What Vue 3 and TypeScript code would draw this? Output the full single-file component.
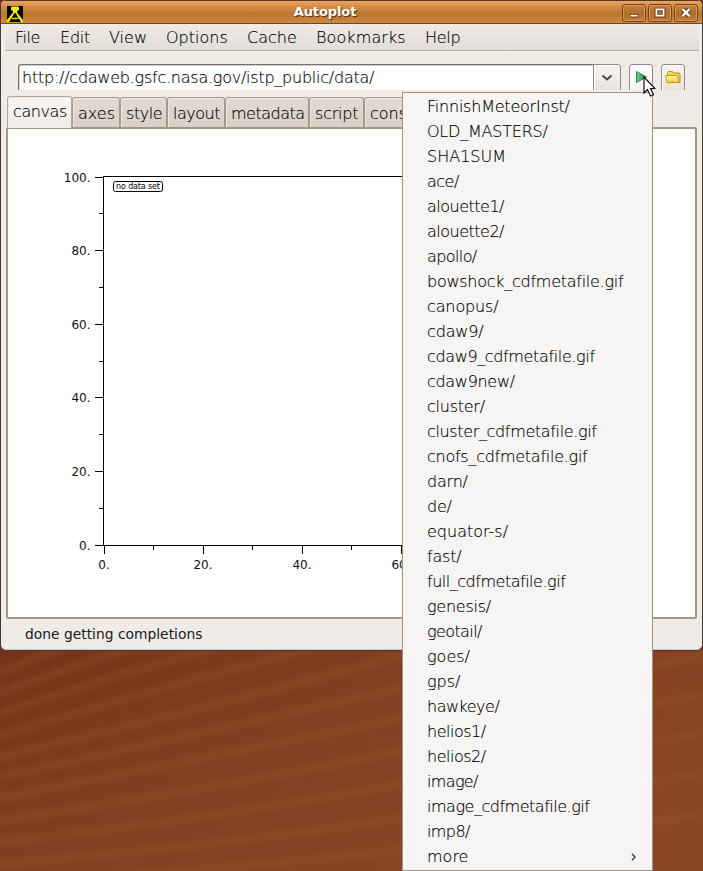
<script setup lang="ts">
interface Caption { label: string; width: number; spacing: number }
const menus: Caption[] = [
  { label: 'File', width: 45, spacing: -0.5 },
  { label: 'Edit', width: 49, spacing: -0.2 },
  { label: 'View', width: 57, spacing: 0 },
  { label: 'Options', width: 81, spacing: 0 },
  { label: 'Cache', width: 69, spacing: 0 },
  { label: 'Bookmarks', width: 109, spacing: 0.1 },
  { label: 'Help', width: 50, spacing: -0.3 },
]
const tabs: Caption[] = [
  { label: 'axes', width: 48, spacing: 0 },
  { label: 'style', width: 47, spacing: -0.45 },
  { label: 'layout', width: 58, spacing: -0.5 },
  { label: 'metadata', width: 84, spacing: -0.5 },
  { label: 'script', width: 55, spacing: -0.2 },
  { label: 'console', width: 72, spacing: 0 },
]
const completions: [string, number][] = [
  ['FinnishMeteorInst/', -0.22], ['OLD_MASTERS/', -0.22], ['SHA1SUM', 0], ['ace/', -0.5],
  ['alouette1/', -0.5], ['alouette2/', -0.5], ['apollo/', -0.6], ['bowshock_cdfmetafile.gif', -0.26],
  ['canopus/', -0.12], ['cdaw9/', -0.15], ['cdaw9_cdfmetafile.gif', -0.36], ['cdaw9new/', -0.3],
  ['cluster/', -0.25], ['cluster_cdfmetafile.gif', -0.35], ['cnofs_cdfmetafile.gif', -0.26],
  ['darn/', -0.2], ['de/', -0.2], ['equator-s/', 0], ['fast/', -0.2], ['full_cdfmetafile.gif', -0.48],
  ['genesis/', -0.25], ['geotail/', -0.6], ['goes/', 0], ['gps/', 0], ['hawkeye/', -0.5],
  ['helios1/', -0.5], ['helios2/', -0.5], ['image/', -0.65], ['image_cdfmetafile.gif', -0.48], ['imp8/', -0.6],
]
const yTicks = [
  { label: '100.', y: 177 }, { label: '80.', y: 250 }, { label: '60.', y: 324 },
  { label: '40.', y: 397 }, { label: '20.', y: 471 }, { label: '0.', y: 545 },
]
const yMinor: number[] = [213, 287, 361, 434, 508]
const xTicks = [
  { label: '0.', x: 104 }, { label: '20.', x: 203 }, { label: '40.', x: 302 }, { label: '60.', x: 401 },
]
const xMinor: number[] = [153, 252, 351]
const rays: string[] = [
  'M-5 24Q30 10 65 -3', 'M-5 44Q60 21 135 -3', 'M-5 65Q105 27 220 -3', 'M-5 87Q140 43 315 -3',
  'M-5 108Q210 57 403 5T703 -55', 'M-5 128Q200 83 403 38T703 -20', 'M-5 149Q200 109 403 68T703 5',
  'M-5 171Q200 141 403 101T703 45', 'M-5 193Q200 170 403 134T703 84', 'M-5 214Q200 198 403 168T703 125',
  'M-5 235Q200 222 403 200T703 165',
]
</script>

<template>
  <main class="desktop">
    <svg class="wallpaper" width="703" height="221" viewBox="0 0 703 221">
      <defs>
        <linearGradient id="ground" x1="0" y1="0" x2="1" y2=".6">
          <stop offset="0" stop-color="#75311a" />
          <stop offset=".45" stop-color="#843e21" />
          <stop offset="1" stop-color="#8c4524" />
        </linearGradient>
        <filter id="soft"><feGaussianBlur stdDeviation="3" /></filter>
      </defs>
      <rect width="703" height="221" fill="url(#ground)" />
      <g fill="none" stroke="#97522a" stroke-width="7" opacity=".48" filter="url(#soft)">
        <path v-for="ray in rays" :key="ray" :d="ray" />
      </g>
    </svg>

    <section class="window">
      <header class="titlebar">
        <svg class="logo" width="16" height="16" viewBox="0 0 16 16">
          <rect width="16" height="16" fill="#000" />
          <path d="M5 .500h6l1 1v2.500l-2 1v1.500L16 14v2h-2L8.500 7h-1L2 16H0v-2L6 6.500V5L4 4V1.500z" fill="#f5ef00" />
          <path d="M4.500 11.500l2 1.500 1.500-1 1 1 2-1.500 1 1" fill="none" stroke="#ddd600" stroke-width="1.200" />
        </svg>
        <h1>Autoplot</h1>
        <div class="controls">
          <svg width="24" height="18" viewBox="0 0 24 18">
            <path d="M7.500 10.500h9v3h-9z" fill="#fff" stroke="#653813" />
          </svg>
          <svg width="24" height="18" viewBox="0 0 24 18">
            <path d="M8 5h8v7H8z" fill="none" stroke="#653813" stroke-width="4" />
            <path d="M8 5h8v7H8z" fill="none" stroke="#fff" stroke-width="2" />
          </svg>
          <svg width="24" height="18" viewBox="0 0 24 18">
            <path d="M8 4.500l8 8m0-8l-8 8" stroke="#653813" stroke-width="5" />
            <path d="M8 4.500l8 8m0-8l-8 8" stroke="#fff" stroke-width="2.700" />
          </svg>
        </div>
      </header>

      <nav class="menubar">
        <span v-for="menu in menus" :key="menu.label" :style="{ width: menu.width + 'px', letterSpacing: menu.spacing + 'px' }">{{ menu.label }}</span>
      </nav>

      <div class="address-row">
        <div class="address">http://cdaweb.gsfc.nasa.gov/istp_public/data/</div>
        <div class="dropdown">
          <svg width="25" height="25" viewBox="0 0 25 25"><path d="M8.500 10.500l4.500 4 4.500-4" fill="none" stroke="#47433e" stroke-width="1.800" /></svg>
        </div>
        <div class="tool go">
          <svg width="22" height="25" viewBox="0 0 22 25">
            <defs><linearGradient id="play" x2="1"><stop stop-color="#73c58d" /><stop offset="1" stop-color="#238c4b" /></linearGradient></defs>
            <path d="M6.500 6.500v11l10-5.500z" fill="url(#play)" stroke="#259151" />
          </svg>
        </div>
        <div class="tool">
          <svg width="22" height="25" viewBox="0 0 22 25">
            <defs><linearGradient id="folder" x2="0" y2="1"><stop stop-color="#fff6b6" /><stop offset="1" stop-color="#efce38" /></linearGradient></defs>
            <path d="M5.500 17.500V7.500l1-1h4l1 1.500h5.500l1 1v8.500z" fill="#f5da59" stroke="#ba8b00" />
            <path d="M3.500 10.500h12l1.500 7H5z" fill="url(#folder)" stroke="#c39812" />
          </svg>
        </div>
      </div>

      <div class="tabs">
        <div class="tab active">canvas</div>
        <div v-for="tab in tabs" :key="tab.label" class="tab" :style="{ width: tab.width + 'px', letterSpacing: tab.spacing + 'px' }">{{ tab.label }}</div>
      </div>

      <div class="canvas">
        <svg width="686" height="488" viewBox="8 129 686 488">
          <g stroke="#000" fill="none" shape-rendering="crispEdges">
            <path d="M103.500 176V546M103 176.500H600M103 545.500H600" />
            <path v-for="tick in yTicks" :key="tick.y" :d="`M95 ${tick.y + 0.5}h8`" />
            <path v-for="y in yMinor" :key="y" :d="`M99 ${y + 0.5}h4`" />
            <path v-for="tick in xTicks" :key="tick.x" :d="`M${tick.x + 0.5} 546v8`" />
            <path v-for="x in xMinor" :key="x" :d="`M${x + 0.5} 546v4`" />
          </g>
          <g class="tick-text">
            <text v-for="tick in yTicks" :key="tick.y" x="90.500" :y="tick.y + 5" text-anchor="end">{{ tick.label }}</text>
            <text v-for="tick in xTicks" :key="tick.x" :x="tick.x" y="569" text-anchor="middle">{{ tick.label }}</text>
          </g>
          <rect x="113.500" y="181.500" width="49" height="10" rx="2" fill="#fff" stroke="#000" />
          <text class="legend" x="116" y="189" textLength="44">no data set</text>
        </svg>
      </div>
      <footer class="status">done getting completions</footer>
    </section>

    <aside class="popup">
      <div v-for="[name, spacing] in completions" :key="name" class="item" :style="{ letterSpacing: spacing + 'px' }">{{ name }}</div>
      <div class="item more">
        <span>more</span>
        <svg width="6" height="8" viewBox="0 0 6 8"><path d="M1 .8l3 3.200-3 3.200" fill="none" stroke="#47433e" stroke-width="1.400" /></svg>
      </div>
    </aside>

    <svg class="pointer" width="13" height="22" viewBox="0 0 13 22">
      <path d="M1 1v16l3.500-3.500L7.500 20l3-1.300L7.500 12.500H12z" fill="#fff" stroke="#160d13" stroke-width="1.200" />
    </svg>
  </main>
</template>

<style>
body { margin: 0; overflow: hidden; }
</style>

<style scoped>
* { box-sizing: border-box; }
svg { display: block; flex: none; }
.desktop { position: relative; width: 703px; height: 871px; overflow: hidden; background: #75301a; color: #000; font: 200 16px "DejaVu Sans Light", "DejaVu Sans", sans-serif; -webkit-text-stroke: .14px; }
.wallpaper { position: absolute; left: 0; top: 650px; }
.window { position: relative; width: 703px; height: 651px; overflow: hidden; border: 1px solid #403b38; border-top: 0; border-radius: 6px; background: #efebe7; box-shadow: inset 0 -1px #d0cac4; }
.titlebar { height: 24px; display: flex; align-items: center; padding: 2px 4px 0 6px; border-top: 1px solid #573520; border-bottom: 1px solid #704721; background: linear-gradient(#e9a35e 0, #da924a 20%, #c27c37 50%, #b9742e 52%, #ce8841 100%); }
.logo { margin-top: 1px; }
.titlebar h1 { flex: 1; margin: -2px 0 0 5px; text-align: center; color: #fff; font: 700 13px/18px "DejaVu Sans", sans-serif; letter-spacing: -.1px; -webkit-text-stroke: 0; text-shadow: 1px 1px 1px #4a2d17; }
.controls { display: flex; gap: 2px; }
.controls svg { border: 1px solid #774315; border-radius: 3px; background: linear-gradient(#c98440, #b06e2b 50%, #c17b36); box-shadow: inset 0 0 0 1px #d79a5c; }
.menubar { height: 27px; margin: 0 3px 0 4px; padding: 0 0 0 10px; display: flex; background: linear-gradient(#efebe7, #e3ddd8); border-bottom: 1px solid #bbaea2; line-height: 27px; }
.menubar span { white-space: nowrap; }
.address-row { display: flex; height: 26px; margin: 13px 0 0 17px; overflow: hidden; }
.address { width: 575px; height: 30px; padding: 0 3px; border: 1px solid #7a6f65; border-right: 0; border-radius: 3px 0 0; background: #fff; box-shadow: inset 1px 1px #d2ceca; line-height: 26px; letter-spacing: -.24px; white-space: nowrap; }
.dropdown, .tool { height: 30px; border: 1px solid #948a80; background: linear-gradient(#f7f5f3, #e5e0dc); box-shadow: inset 1px 1px #fff; }
.dropdown { width: 28px; border-radius: 0 3px 0 0; }
.tool { width: 24px; margin-left: 8px; border-radius: 3px 3px 0 0; }
.tool.go { background: linear-gradient(#fff, #f3f1ef); }
.tabs { height: 31px; margin: 6px 0 0 6px; display: flex; align-items: flex-end; }
.tab { flex: none; height: 30px; padding-left: 5px; border: 1px solid #a79888; border-bottom: 0; border-radius: 3px 3px 0 0; background: linear-gradient(#e2dbd5, #d8cfc7); box-shadow: inset 1px 1px #eee8e2; line-height: 31px; white-space: nowrap; overflow: hidden; }
.tab.active { position: relative; z-index: 1; width: 65px; height: 32px; margin-bottom: -1px; border-color: #b4a89c; background: linear-gradient(#f8f6f4, #efebe7); line-height: 30px; letter-spacing: -.4px; }
.canvas { width: 691px; height: 492px; margin: 0 0 0 5px; border: 2px solid #a69686; border-radius: 2px; background: #fff; }
.status { height: 32px; padding-left: 24px; font: 400 13.850px/31px "DejaVu Sans", sans-serif; color: #1a1a1a; -webkit-text-stroke: 0; }
.tick-text { font: 400 12px "DejaVu Sans", sans-serif; fill: #111; -webkit-text-stroke: 0; }
.legend { font: 400 8px "DejaVu Sans", sans-serif; fill: #000; -webkit-text-stroke: 0; }
.popup { position: absolute; left: 402px; top: 92px; width: 251px; height: 779px; padding: 1px 15px 1px 24px; border: 1px solid #a39281; background: #f6f5f3; }
.item { height: 25px; line-height: 25px; white-space: nowrap; }
.more { display: flex; align-items: center; justify-content: space-between; }
.pointer { position: absolute; left: 643px; top: 76px; }
</style>
